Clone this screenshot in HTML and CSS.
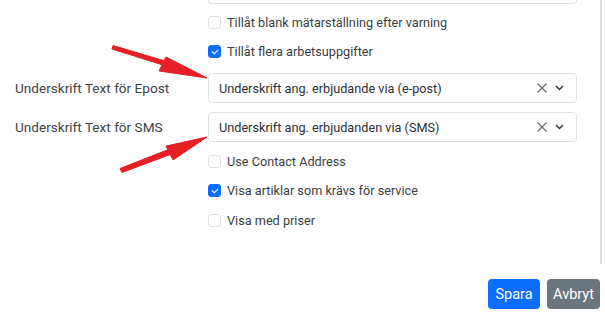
FILE: index.html
```html
<!DOCTYPE html>
<html lang="sv">
<head>
<meta charset="utf-8">
<link rel="stylesheet" href="styles.css">
</head>
<body>
<div class="page">
  <div class="form">
    <div class="row"><div class="label"></div><div class="input-stub"></div></div>
    <div class="row r-check1"><div class="label"></div><label class="check"><span class="box"></span>Tillåt blank mätarställning efter varning</label></div>
    <div class="row r-check"><div class="label"></div><label class="check"><span class="box on"></span>Tillåt flera arbetsuppgifter</label></div>
    <div class="row r-sel1"><div class="label">Underskrift Text för Epost</div>
      <div class="select"><span class="val">Underskrift ang. erbjudande via (e-post)</span>
        <svg class="x" viewBox="0 0 10 10" width="10" height="10"><path d="M0.5 0.5 L9.5 9.5 M9.5 0.5 L0.5 9.5" stroke="#666" stroke-width="1.1" fill="none"/></svg>
        <svg class="chev" viewBox="0 0 9 6" width="9" height="6"><path d="M1 1 L4.5 4.5 L8 1" stroke="#333" stroke-width="1.5" fill="none"/></svg>
      </div>
    </div>
    <div class="row r-sel"><div class="label">Underskrift Text för SMS</div>
      <div class="select"><span class="val">Underskrift ang. erbjudanden via (SMS)</span>
        <svg class="x" viewBox="0 0 10 10" width="10" height="10"><path d="M0.5 0.5 L9.5 9.5 M9.5 0.5 L0.5 9.5" stroke="#666" stroke-width="1.1" fill="none"/></svg>
        <svg class="chev" viewBox="0 0 9 6" width="9" height="6"><path d="M1 1 L4.5 4.5 L8 1" stroke="#333" stroke-width="1.5" fill="none"/></svg>
      </div>
    </div>
    <div class="row r-check"><div class="label"></div><label class="check"><span class="box"></span>Use Contact Address</label></div>
    <div class="row r-check"><div class="label"></div><label class="check"><span class="box on"></span>Visa artiklar som krävs för service</label></div>
    <div class="row r-check5"><div class="label"></div><label class="check"><span class="box"></span>Visa med priser</label></div>
  </div>
  <div class="footer">
    <button class="btn primary">Spara</button>
    <button class="btn secondary">Avbryt</button>
  </div>
  <svg class="arrows" width="605" height="319" viewBox="0 0 605 319">
    <g fill="#e61e26" stroke="#e61e26" stroke-linejoin="round">
      <polygon points="113,45.5 165,61 166,66 112,49" stroke-width="1"/>
      <polygon points="207,78 159,71 166,57" stroke-width="1"/>
      <polygon points="120,168.5 171,148.5 173,153.5 122,172.5" stroke-width="1"/>
      <polygon points="207,137 173,160 166,146" stroke-width="1"/>
    </g>
  </svg>
</div>
</body>
</html>
```
FILE: styles.css
```css
* { box-sizing: border-box; }
html, body { margin: 0; padding: 0; background: #fff; }
body {
  font-family: Roboto, "Noto Sans", sans-serif;
  font-size: 12.7px;
  color: #3a3d40;
}
.page {
  position: relative;
  width: 605px;
  height: 319px;
  overflow: hidden;
}
.form {
  width: 602px;
  height: 264px;
  border-right: 2px solid #dcdcdc;
}
.row {
  display: flex;
  align-items: center;
}
.label {
  width: 208px;
  flex: none;
  padding-left: 15px;
  font-size: 13.6px;
  color: #404347;
}
.input-stub {
  width: 369px;
  height: 4px;
  border: 1px solid #dee2e6;
  border-top: none;
  border-radius: 0 0 4px 4px;
}
.r-check1 { height: 20px; margin-top: 8px; }
.r-check { height: 20px; margin-top: 9px; }
.r-check5 { height: 20px; margin-top: 10px; }
.r-sel1 { height: 30px; margin-top: 12px; }
.r-sel { height: 30px; margin-top: 9px; }
.check {
  display: flex;
  align-items: center;
  gap: 6px;
}
.box {
  width: 13px;
  height: 13px;
  border: 1px solid #dee2e6;
  border-radius: 3px;
  background: #fff;
  position: relative;
}
.box.on {
  background: #0d6efd;
  border-color: #0d6efd;
}
.box.on::after {
  content: "";
  position: absolute;
  left: 3.5px;
  top: 2px;
  width: 3px;
  height: 5px;
  border: solid #fff;
  border-width: 0 1.6px 1.6px 0;
  transform: rotate(45deg);
}
.select {
  width: 369px;
  height: 30px;
  border: 1px solid #dee2e6;
  border-radius: 4px;
  display: flex;
  align-items: center;
  padding: 0 12px 0 10px;
}
.select .val { flex: 1; color: #2b2f33; }
.select .x { margin-right: 8px; }
.footer {
  display: flex;
  justify-content: flex-end;
  gap: 7px;
  padding: 15px 5px 0 0;
}
.btn {
  font-family: inherit;
  font-size: 14.5px;
  color: #fff;
  border: none;
  border-radius: 4px;
  height: 30px;
  padding: 0;
  cursor: pointer;
}
.primary { background: #0d6efd; width: 52px; }
.secondary { background: #6c757d; width: 53px; }
.arrows {
  position: absolute;
  left: 0;
  top: 0;
  pointer-events: none;
}
```
